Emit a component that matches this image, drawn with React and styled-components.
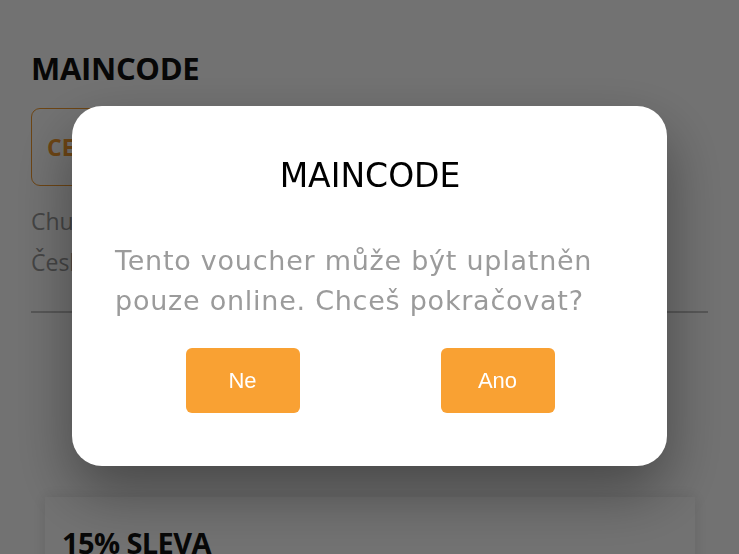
import React from "react";
import styled, { createGlobalStyle } from "styled-components";

const GlobalStyle = createGlobalStyle`
  html, body { margin: 0; padding: 0; background: #ffffff; overflow: hidden; }
  body { font-family: "Open Sans", "Noto Sans", Arial, sans-serif; }
  * { box-sizing: border-box; }
`;

const Page = styled.div`
  width: 739px;
  height: 554px;
  padding: 48px 31px 0 31px;
  display: flex;
  flex-direction: column;
  background: #ffffff;
  overflow: hidden;
  & > * { flex-shrink: 0; }
`;

const PageTitle = styled.h1`
  margin: 0;
  font-size: 31px;
  font-weight: 700;
  line-height: 40px;
  color: #111;
  letter-spacing: -0.3px;
`;

const OutlineChip = styled.div`
  margin-top: 20px;
  width: 210px;
  height: 78px;
  border: 1.5px solid #f29a2e;
  border-radius: 9px;
  display: flex;
  align-items: center;
  padding-left: 15px;
  font-size: 23px;
  font-weight: 700;
  color: #f29a2e;
`;

const Description = styled.p`
  margin: 15px 0 0 0;
  font-size: 23px;
  line-height: 41px;
  color: #9a9a9a;
  width: 560px;
`;

const Divider = styled.hr`
  margin: 28px 0 0 0;
  border: none;
  height: 2px;
  width: 677px;
  background: #c4c4c4;
`;

const Card = styled.div`
  margin: 184px 0 0 14px;
  width: 650px;
  height: 120px;
  background: #ffffff;
  box-shadow: 0 0 14px rgba(0, 0, 0, 0.12);
  padding: 26px 17px;
`;

const CardTitle = styled.h2`
  margin: 0;
  font-size: 29px;
  font-weight: 700;
  color: #111;
  letter-spacing: -0.6px;
`;

const Backdrop = styled.div`
  position: fixed;
  inset: 0;
  background: rgba(0, 0, 0, 0.553);
`;

const Modal = styled.div`
  position: fixed;
  left: 72px;
  top: 106px;
  width: 595px;
  height: 360px;
  background: #ffffff;
  border-radius: 30px;
  box-shadow: 0 26px 60px rgba(0, 0, 0, 0.38);
  display: flex;
  flex-direction: column;
  padding: 49px 42px 0 43px;
  font-family: "DejaVu Sans", "Open Sans", sans-serif;
`;

const ModalTitle = styled.h3`
  margin: 0;
  text-align: center;
  font-size: 33px;
  font-weight: 400;
  line-height: 42px;
  color: #000;
`;

const ModalText = styled.p`
  margin: 44px 0 0 0;
  font-size: 27px;
  letter-spacing: 0.75px;
  line-height: 40px;
  color: #9b9b9b;
`;

const ButtonRow = styled.div`
  margin-top: 27px;
  display: flex;
  justify-content: center;
  gap: 141px;
`;

const ActionButton = styled.button`
  width: 114px;
  height: 65px;
  border: none;
  border-radius: 6px;
  background: #f9a133;
  color: #ffffff;
  font-family: "Liberation Sans", Arial, sans-serif;
  font-size: 22px;
  font-weight: 400;
  cursor: pointer;
`;

export default function App() {
  return (
    <>
      <GlobalStyle />
      <Page>
        <PageTitle>MAINCODE</PageTitle>
        <OutlineChip>CENA</OutlineChip>
        <Description>
          Chutné jídlo se slevou ve vybraných restauracích České republiky.
        </Description>
        <Divider />
        <Card>
          <CardTitle>15% SLEVA</CardTitle>
        </Card>
      </Page>
      <Backdrop />
      <Modal>
        <ModalTitle>MAINCODE</ModalTitle>
        <ModalText>
          Tento voucher může být uplatněn pouze online. Chceš pokračovat?
        </ModalText>
        <ButtonRow>
          <ActionButton>Ne</ActionButton>
          <ActionButton>Ano</ActionButton>
        </ButtonRow>
      </Modal>
    </>
  );
}
